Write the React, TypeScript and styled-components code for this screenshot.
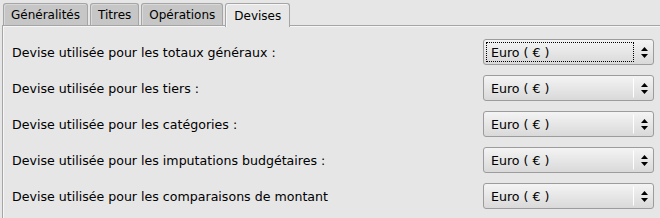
import React from 'react';
import styled, { createGlobalStyle } from 'styled-components';

const GlobalStyle = createGlobalStyle`
  html, body {
    margin: 0;
    padding: 0;
    background: #e6e6e6;
    font-family: "DejaVu Sans", "Liberation Sans", sans-serif;
    font-size: 12.6px;
    color: #000;
  }
`;

const tabs = ['Généralités', 'Titres', 'Opérations', 'Devises'];

const rows = [
  'Devise utilisée pour les totaux généraux :',
  'Devise utilisée pour les tiers :',
  'Devise utilisée pour les catégories :',
  'Devise utilisée pour les imputations budgétaires :',
  'Devise utilisée pour les comparaisons de montant',
];

const Window = styled.div`
  width: 660px;
  height: 218px;
  overflow: hidden;
  padding-top: 1px;
  box-sizing: border-box;
`;

const TabBar = styled.div`
  display: flex;
  align-items: flex-end;
  gap: 2px;
  padding-left: 3px;
  height: 24px;
`;

const Tab = styled.div<{ $active?: boolean }>`
  height: ${p => (p.$active ? '24px' : '22px')};
  box-sizing: border-box;
  padding: 0 ${p => (p.$active ? '8px' : '7px')};
  display: flex;
  align-items: center;
  font-size: 12px;
  background: ${p => (p.$active ? '#e6e6e6' : '#c6c6c6')};
  border: 1px solid #a5a5a5;
  border-bottom: none;
  border-radius: 3px 3px 0 0;
  box-shadow: inset 1px 1px 0 ${p => (p.$active ? '#f6f6f6' : '#d8d8d8')};
  position: relative;
  z-index: ${p => (p.$active ? 1 : 0)};
  margin-bottom: ${p => (p.$active ? '-2px' : '0')};
`;

const Panel = styled.div`
  margin-left: 2px;
  border-top: 1px solid #a5a5a5;
  border-left: 1px solid #a5a5a5;
  box-shadow: inset 1px 1px 0 #f6f6f6;
  padding: 13px 6px 0 9px;
  display: flex;
  flex-direction: column;
  gap: 10px;
  height: 200px;
`;

const Row = styled.div`
  display: flex;
  align-items: center;
  justify-content: space-between;
  height: 26px;
`;

const Label = styled.span`
  white-space: nowrap;
`;

const Combo = styled.div`
  width: 171px;
  height: 26px;
  box-sizing: border-box;
  border: 1px solid #9c9c9c;
  border-radius: 3px;
  background: linear-gradient(#f4f4f4, #d9d9d9);
  display: flex;
  align-items: stretch;
`;

const ComboText = styled.div<{ $focused?: boolean }>`
  flex: 1;
  display: flex;
  align-items: center;
  padding-left: 4px;
  margin: 2px 1px 2px 2px;
  border: 1px dotted ${p => (p.$focused ? '#000' : 'transparent')};
  border-right: 1px ${p => (p.$focused ? 'dotted #000' : 'solid #ffffff')};
`;

const ComboArrow = styled.div`
  width: 18px;
  display: flex;
  align-items: center;
  justify-content: center;
`;

const Arrows = () => (
  <svg width="7" height="11" viewBox="0 0 7 11">
    <path d="M3.5 0 L7 4 L0 4 Z" fill="#000" />
    <path d="M0 7 L7 7 L3.5 11 Z" fill="#000" />
  </svg>
);

export default function App() {
  return (
    <Window>
      <GlobalStyle />
      <TabBar>
        {tabs.map((t, i) => (
          <Tab key={t} $active={i === 3}>{t}</Tab>
        ))}
      </TabBar>
      <Panel>
        {rows.map((r, i) => (
          <Row key={r}>
            <Label>{r}</Label>
            <Combo>
              <ComboText $focused={i === 0}>Euro ( € )</ComboText>
              <ComboArrow><Arrows /></ComboArrow>
            </Combo>
          </Row>
        ))}
      </Panel>
    </Window>
  );
}
